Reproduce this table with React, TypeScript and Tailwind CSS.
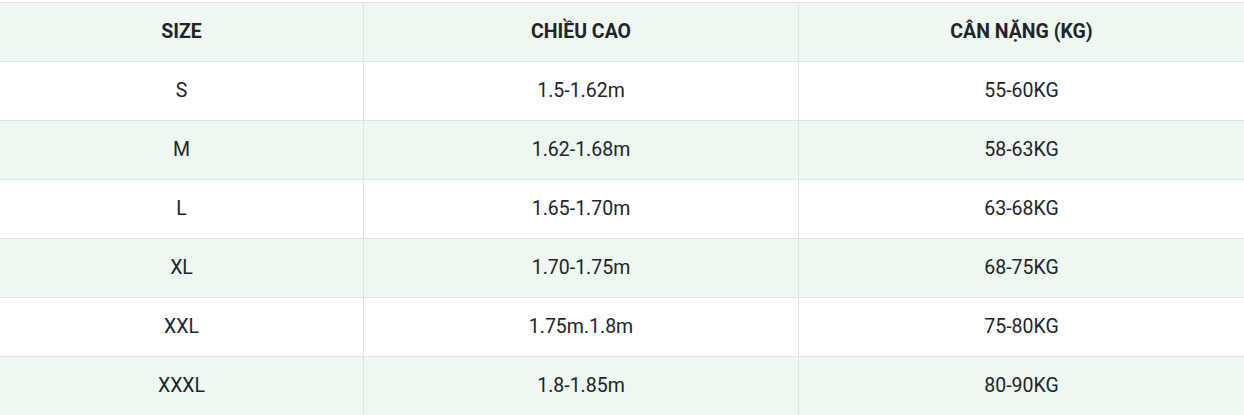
import React from "react";

const rows = [
  ["S", "1.5-1.62m", "55-60KG"],
  ["M", "1.62-1.68m", "58-63KG"],
  ["L", "1.65-1.70m", "63-68KG"],
  ["XL", "1.70-1.75m", "68-75KG"],
  ["XXL", "1.75m.1.8m", "75-80KG"],
  ["XXXL", "1.8-1.85m", "80-90KG"],
];

export default function App() {
  return (
    <div className="w-[1244px] h-[415px] bg-white overflow-hidden pt-[2px]" style={{ fontFamily: "Roboto, 'Noto Sans', sans-serif" }}>
      <div className="grid grid-cols-[363px_435px_1fr] text-[19.5px] text-[#212529]">
        {["SIZE", "CHIỀU CAO", "CÂN NẶNG (KG)"].map((h, i) => (
          <div
            key={h}
            className={`h-[59px] border-t border-[#dee2e6] bg-[#eef7f0] flex items-center justify-center font-bold ${i > 0 ? "border-l" : ""}`}
          >
            {h}
          </div>
        ))}
        {rows.map((r, ri) =>
          r.map((c, ci) => (
            <div
              key={`${ri}-${ci}`}
              className={`h-[59px] border-t border-[#dee2e6] flex items-center justify-center ${ri % 2 === 1 ? "bg-[#eef7f0]" : "bg-white"} ${ci > 0 ? "border-l" : ""}`}
            >
              {c}
            </div>
          ))
        )}
      </div>
    </div>
  );
}
